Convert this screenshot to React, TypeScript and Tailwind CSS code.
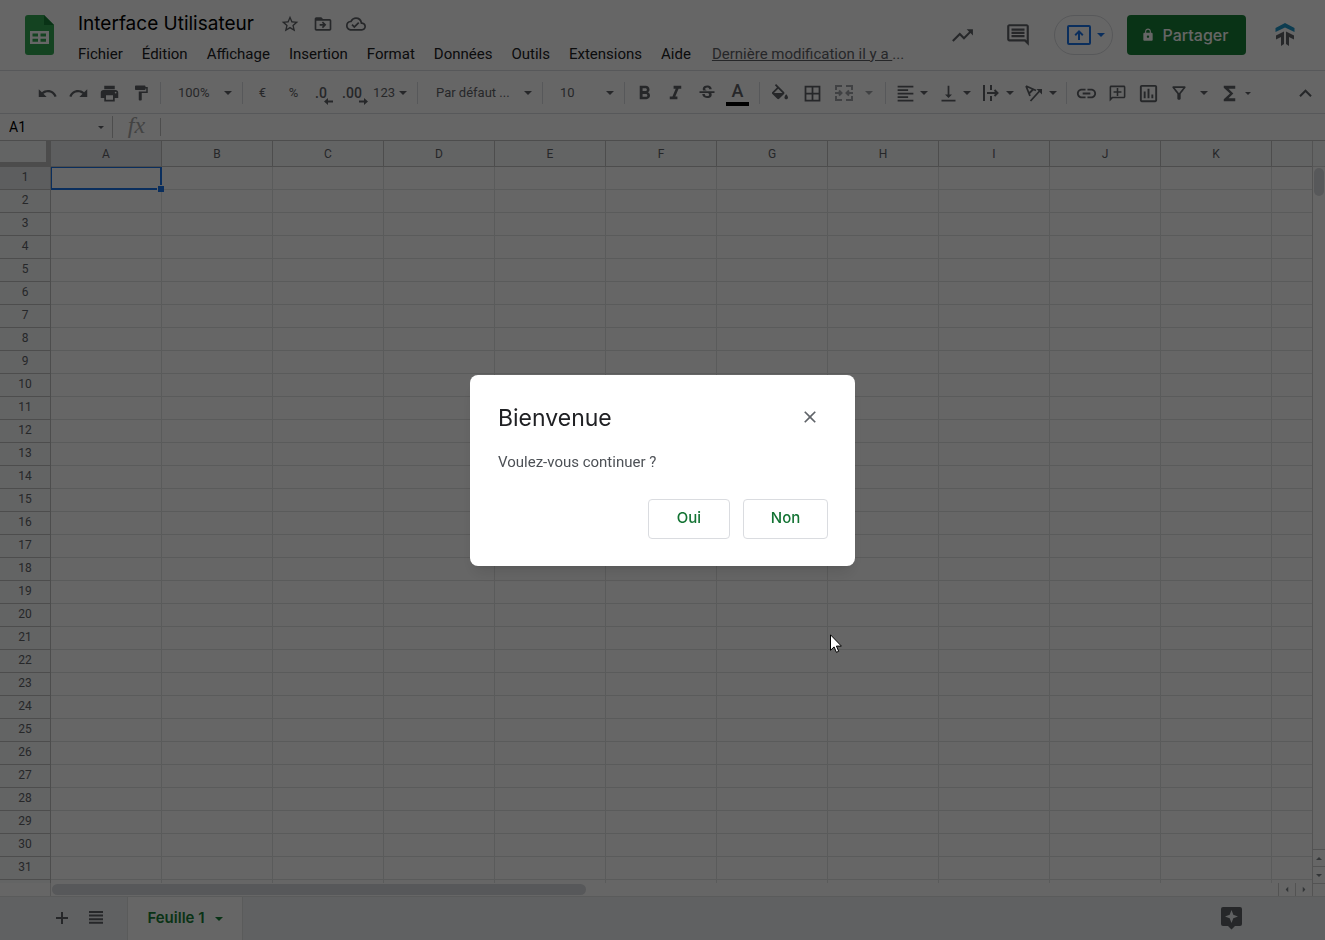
import React from "react";
import {
  MdBorderAll,
  MdClose,
  MdDriveFileMoveOutline,
  MdFormatAlignLeft,
  MdFormatBold,
  MdFormatItalic,
  MdFormatPaint,
  MdFunctions,
  MdInsertLink,
  MdKeyboardArrowUp,
  MdLock,
  MdOutlineAddComment,
  MdOutlineCloudDone,
  MdOutlineComment,
  MdOutlineFilterAlt,
  MdOutlineInsertChart,
  MdPrint,
  MdRedo,
  MdStarBorder,
  MdStrikethroughS,
  MdTrendingUp,
  MdUndo,
  MdVerticalAlignBottom,
} from "react-icons/md";

const menus = [
  "Fichier",
  "Édition",
  "Affichage",
  "Insertion",
  "Format",
  "Données",
  "Outils",
  "Extensions",
  "Aide",
];

const columns = ["A", "B", "C", "D", "E", "F", "G", "H", "I", "J", "K"];
const rows = Array.from({ length: 31 }, (_, i) => i + 1);

const Caret: React.FC<{ small?: boolean; className?: string }> = ({
  small,
  className = "",
}) => (
  <svg
    viewBox="0 0 8 4"
    className={`shrink-0 fill-current ${small ? "w-[6px] h-[3px]" : "w-2 h-1"} ${className}`}
  >
    <path d="M0 0h8L4 4z" />
  </svg>
);

const ToolButton: React.FC<{
  label: string;
  className?: string;
  children: React.ReactNode;
}> = ({ label, className = "w-[31px]", children }) => (
  <button
    aria-label={label}
    className={`h-8 shrink-0 flex items-center justify-center ${className}`}
  >
    {children}
  </button>
);

const SplitButton: React.FC<{
  label: string;
  className?: string;
  gap?: string;
  small?: boolean;
  children: React.ReactNode;
}> = ({ label, className = "w-[43px]", gap = "", small, children }) => (
  <button
    aria-label={label}
    className={`h-8 shrink-0 flex items-center ${className}`}
  >
    <span className="w-[30px] shrink-0 flex justify-center">{children}</span>
    <Caret small={small} className={gap} />
  </button>
);

const Divider = () => (
  <span className="w-px h-[22px] mx-1 shrink-0 bg-[#dadce0]" />
);

const SheetsLogo = () => (
  <svg viewBox="0 0 29 40" className="w-[29px] h-10">
    <path
      d="M3 0h16l10 10v27a3 3 0 0 1-3 3H3a3 3 0 0 1-3-3V3a3 3 0 0 1 3-3z"
      fill="#34a853"
    />
    <path d="M19 0l10 10H19z" fill="#188038" />
    <path
      d="M5 16h19v13H5zM7.500 18.500v3h5.500v-3zM15.500 18.500v3h5.500v-3zM7.500 23.700v3h5.500v-3zM15.500 23.700v3h5.500v-3z"
      fill="#fff"
      fillRule="evenodd"
    />
  </svg>
);

const AccountLogo = () => (
  <svg viewBox="0 0 20 24" className="w-5 h-6">
    <path d="M10 0l9.500 5v4L10 4.500.5 9V5z" fill="#2196c9" />
    <path d="M9 8.500V21l-3 2v-9l-5 2.500v-4z" fill="#5f6368" />
    <path d="M11 8.500V21l3 2v-9l5 2.500v-4z" fill="#5f6368" />
  </svg>
);

const DecimalIcon: React.FC<{ text: string; increase?: boolean }> = ({
  text,
  increase,
}) => (
  <span className="relative text-sm font-medium leading-4">
    {text}
    <svg
      viewBox="0 0 9 7"
      className="absolute -right-1.5 -bottom-1 w-[9px] h-[7px] fill-current"
    >
      <path
        d={increase ? "M0 2.500h5V0l4 3.500L5 7V4.500H0z" : "M9 2.500H4V0L0 3.500 4 7V4.500h5z"}
      />
    </svg>
  </span>
);

const Header = () => (
  <header className="flex items-start h-[71px] shrink-0 pl-[25px] pr-[30px] border-b border-[#dadce0]">
    <div className="pt-[15px]">
      <SheetsLogo />
    </div>
    <div className="flex-1 min-w-0 pl-6 pt-2.5">
      <div className="flex items-center h-7 text-[#5f6368]">
        <h1 className="font-['Inter'] text-[19px] leading-7 text-black">
          Interface Utilisateur
        </h1>
        <div className="flex items-center gap-[13px] ml-[26px]">
          <button aria-label="Suivre">
            <MdStarBorder size={20} />
          </button>
          <button aria-label="Déplacer">
            <MdDriveFileMoveOutline size={20} />
          </button>
          <button aria-label="État du document">
            <MdOutlineCloudDone size={20} />
          </button>
        </div>
      </div>
      <nav className="flex items-center gap-[19px] h-8 text-[15px] whitespace-nowrap text-[#202124]">
        {menus.map((menu) => (
          <button key={menu}>{menu}</button>
        ))}
        <a href="#historique" className="ml-0.5 text-[#5f6368]">
          <span className="underline">Dernière modification il y a </span>...
        </a>
      </nav>
    </div>
    <div className="flex items-center h-10 mt-[15px] shrink-0">
      <button aria-label="Activité" className="text-[#5f6368]">
        <MdTrendingUp size={25} />
      </button>
      <button aria-label="Commentaires" className="ml-[30px] text-[#5f6368]">
        <MdOutlineComment size={26} />
      </button>
      <button
        aria-label="Présenter"
        className="ml-[23px] flex items-center justify-center gap-1.5 w-[59px] h-10 pl-1 rounded-full border border-[#dadce0] text-[#1a73e8]"
      >
        <svg viewBox="0 0 24 20" className="w-6 h-5">
          <rect
            x="1"
            y="1"
            width="22"
            height="18"
            rx="1"
            fill="none"
            stroke="currentColor"
            strokeWidth="2"
          />
          <path
            d="M12 5l4.500 4.500-1.400 1.400L13 8.800V15h-2V8.800l-2.100 2.100-1.400-1.400z"
            fill="currentColor"
          />
        </svg>
        <Caret />
      </button>
      <button className="ml-3.5 flex items-center justify-center gap-2 w-[119px] h-10 pr-1 rounded bg-[#188038] font-['Inter'] text-base font-medium text-white">
        <MdLock size={14} />
        Partager
      </button>
      <button aria-label="Compte" className="ml-[29px]">
        <AccountLogo />
      </button>
    </div>
  </header>
);

const Toolbar = () => (
  <div className="flex items-center h-[43px] shrink-0 pt-0.5 pl-8 pr-1 border-b border-[#dadce0] text-[13px] text-[#5f6368]">
    <ToolButton label="Annuler">
      <MdUndo size={21} />
    </ToolButton>
    <ToolButton label="Rétablir">
      <MdRedo size={21} />
    </ToolButton>
    <ToolButton label="Imprimer">
      <MdPrint size={21} />
    </ToolButton>
    <ToolButton label="Copier la mise en forme">
      <MdFormatPaint size={18} />
    </ToolButton>
    <Divider />
    <button className="flex items-center justify-between w-[73px] pl-[13px] pr-1.5 shrink-0">
      100%
      <Caret />
    </button>
    <Divider />
    <ToolButton label="Devise">€</ToolButton>
    <ToolButton label="Pourcentage">%</ToolButton>
    <ToolButton label="Réduire les décimales" className="w-6">
      <DecimalIcon text=".0" />
    </ToolButton>
    <ToolButton label="Augmenter les décimales" className="w-[38px]">
      <DecimalIcon text=".00" increase />
    </ToolButton>
    <button className="flex items-center justify-end gap-1 w-[42px] pr-1.5 shrink-0">
      123
      <Caret />
    </button>
    <Divider />
    <button className="flex items-center justify-between w-[116px] pl-3.5 pr-1.5 shrink-0">
      Par défaut ...
      <Caret />
    </button>
    <Divider />
    <button className="flex items-center justify-between w-[73px] pl-[13px] pr-1.5 shrink-0">
      10
      <Caret />
    </button>
    <Divider />
    <ToolButton label="Gras">
      <MdFormatBold size={23} />
    </ToolButton>
    <ToolButton label="Italique">
      <MdFormatItalic size={23} />
    </ToolButton>
    <ToolButton label="Barré">
      <MdStrikethroughS size={20} />
    </ToolButton>
    <ToolButton label="Couleur du texte">
      <span className="w-[23px] border-b-4 border-black text-[18px] leading-[22px] font-medium">
        A
      </span>
    </ToolButton>
    <span className="w-0.5 shrink-0" />
    <Divider />
    <ToolButton label="Couleur de remplissage" className="w-8">
      <svg viewBox="3 0 18 20" className="w-4 h-[18px] fill-current">
        <path d="M16.560 8.940L7.620 0 6.210 1.410l2.380 2.380-5.150 5.150a1.490 1.490 0 0 0 0 2.120l5.500 5.500c.290.290.680.440 1.060.440s.770-.150 1.060-.440l5.500-5.500c.590-.580.590-1.530 0-2.120zM5.210 10L10 5.210 14.790 10H5.210zM19 11.500s-2 2.170-2 3.500c0 1.100.900 2 2 2s2-.900 2-2c0-1.330-2-3.500-2-3.500z" />
      </svg>
    </ToolButton>
    <ToolButton label="Bordures" className="w-[33px]">
      <MdBorderAll size={21} />
    </ToolButton>
    <span className="flex text-[#a0a3a7]">
      <SplitButton label="Fusionner" className="w-[52px]" gap="ml-1.5">
        <svg
          viewBox="0 0 18 16"
          className="w-[18px] h-4"
          fill="none"
          stroke="currentColor"
          strokeWidth="2"
        >
          <path d="M1 5V1h6M11 1h6v4M1 11v4h6M11 15h6v-4M0 8h6M18 8h-6M4 5.500L6.500 8 4 10.500M14 5.500L11.500 8l2.500 2.500" />
        </svg>
      </SplitButton>
    </span>
    <Divider />
    <SplitButton label="Alignement horizontal">
      <MdFormatAlignLeft size={21} />
    </SplitButton>
    <SplitButton label="Alignement vertical">
      <MdVerticalAlignBottom size={21} />
    </SplitButton>
    <SplitButton label="Retour à la ligne">
      <svg
        viewBox="0 0 16 16"
        className="w-4 h-4"
        fill="none"
        stroke="currentColor"
        strokeWidth="2"
      >
        <path d="M1 0v16M8 0v5M8 11v5M4 8h10M11.500 5L14.500 8l-3 3" />
      </svg>
    </SplitButton>
    <SplitButton label="Rotation du texte">
      <svg
        viewBox="0 0 18 17"
        className="w-[18px] h-[17px]"
        fill="none"
        stroke="currentColor"
        strokeWidth="1.800"
      >
        <path d="M1 1l10 4.500M1 1l4 10M8 4.500l-4 4M5.500 16L15.500 5" />
        <path d="M11.500 4H17v5.500z" fill="currentColor" stroke="none" />
      </svg>
    </SplitButton>
    <Divider />
    <ToolButton label="Insérer un lien">
      <MdInsertLink size={23} />
    </ToolButton>
    <ToolButton label="Insérer un commentaire">
      <MdOutlineAddComment size={19} className="-scale-x-100" />
    </ToolButton>
    <ToolButton label="Insérer un graphique">
      <MdOutlineInsertChart size={23} />
    </ToolButton>
    <SplitButton label="Filtrer" className="w-[50px]" gap="ml-1.5">
      <MdOutlineFilterAlt size={20} />
    </SplitButton>
    <SplitButton label="Fonctions" className="w-11" gap="ml-px" small>
      <MdFunctions size={23} />
    </SplitButton>
    <span className="flex-1" />
    <ToolButton label="Masquer les menus">
      <MdKeyboardArrowUp size={25} />
    </ToolButton>
  </div>
);

const FormulaBar = () => (
  <div className="flex items-center h-[27px] shrink-0 border-b border-[#c0c0c0]">
    <input
      aria-label="Zone de nom"
      defaultValue="A1"
      className="w-[98px] pl-[9px] text-sm text-black bg-transparent outline-none"
    />
    <Caret small className="text-[#5f6368]" />
    <span className="w-px h-[22px] ml-2 bg-[#c0c0c0]" />
    <span className="w-[47px] text-center font-['Liberation_Serif'] italic text-[24px] leading-6 pb-1 text-[#a8a8a8]">
      fx
    </span>
    <span className="w-px h-[18px] bg-[#c0c0c0]" />
    <input
      aria-label="Formule"
      className="flex-1 px-2 text-sm bg-transparent outline-none"
    />
  </div>
);

const Grid = () => (
  <div className="flex-1 min-w-0 overflow-hidden">
    <table className="w-full border-separate border-spacing-0 text-xs leading-none">
      <thead>
        <tr className="h-[26px]">
          <th className="p-0 w-[51px] min-w-[51px] bg-[#f8f9fa] border-r-[5px] border-b-[5px] border-[#bdbdbd]" />
          {columns.map((column) => (
            <th
              key={column}
              className={`p-0 w-[111px] min-w-[111px] font-normal text-[#5f6368] border-r border-b border-[#c0c0c0] ${
                column === "A" ? "bg-[#e8eaed]" : "bg-[#f8f9fa]"
              }`}
            >
              {column}
            </th>
          ))}
          <th className="p-0 bg-[#f8f9fa] border-b border-[#c0c0c0]" />
        </tr>
      </thead>
      <tbody>
        {rows.map((row) => (
          <tr key={row} className="h-[23px]">
            <th
              className={`p-0 pb-0.5 font-normal text-[#5f6368] border-r border-b border-[#c0c0c0] ${
                row === 1 ? "bg-[#e8eaed]" : "bg-[#f8f9fa]"
              }`}
            >
              {row}
            </th>
            {columns.map((column) => (
              <td
                key={column}
                className="relative p-0 border-r border-b border-[#e2e3e3]"
              >
                {row === 1 && column === "A" && (
                  <span className="absolute z-10 inset-0 -right-px -bottom-px border-2 border-t border-l border-[#1a73e8]">
                    <span className="absolute -right-1 -bottom-1 w-[7px] h-[7px] bg-[#1a73e8] border-t border-l border-white" />
                  </span>
                )}
              </td>
            ))}
            <td className="p-0 border-b border-[#e2e3e3]" />
          </tr>
        ))}
        <tr className="h-[23px]">
          <th className="p-0 bg-[#f8f9fa] border-r border-[#c0c0c0]" />
          {columns.map((column) => (
            <td key={column} className="p-0 border-r border-[#e2e3e3]" />
          ))}
          <td />
        </tr>
      </tbody>
    </table>
  </div>
);

const VerticalScrollbar = () => (
  <div className="flex flex-col w-[13px] shrink-0 border-l border-[#d0d0d0] text-[#80868b]">
    <div className="h-[26px] bg-[#f8f9fa] border-b border-[#d9d9d9]" />
    <div className="flex-1 p-px">
      <div className="h-7 rounded-full bg-[#dadce0]" />
    </div>
    <button
      aria-label="Défiler vers le haut"
      className="flex items-center justify-center h-[17px] border-t border-[#d0d0d0]"
    >
      <Caret small className="rotate-180" />
    </button>
    <button
      aria-label="Défiler vers le bas"
      className="flex items-center justify-center h-[17px] border-t border-[#d0d0d0]"
    >
      <Caret small />
    </button>
  </div>
);

const HorizontalScrollbar = () => (
  <div className="flex h-[13px] shrink-0 text-[#80868b]">
    <div className="w-[51px] border-r border-[#d9d9d9]" />
    <div className="flex-1 p-px">
      <div className="w-[43.600%] h-[11px] rounded-full bg-[#dadce0]" />
    </div>
    <button
      aria-label="Défiler vers la gauche"
      className="flex items-center justify-center w-[17px] border-l border-[#d0d0d0]"
    >
      <Caret small className="rotate-90" />
    </button>
    <button
      aria-label="Défiler vers la droite"
      className="flex items-center justify-center w-[17px] border-l border-[#d0d0d0]"
    >
      <Caret small className="-rotate-90" />
    </button>
    <div className="w-[13px] border-l border-t border-[#d0d0d0]" />
  </div>
);

const SheetTabs = () => (
  <footer className="flex items-stretch h-11 shrink-0 bg-[#f1f3f4] border-t border-[#e2e3e3] text-[#5f6368]">
    <button aria-label="Ajouter une feuille" className="ml-14 pb-0.5">
      <svg viewBox="0 0 12 12" className="w-3 h-3 fill-current">
        <path d="M5 0h2v5h5v2H7v5H5V7H0V5h5z" />
      </svg>
    </button>
    <button aria-label="Toutes les feuilles" className="ml-[21px] pb-0.5">
      <svg viewBox="0 0 14 13" className="w-3.5 h-[13px] fill-current">
        <path d="M0 0h14v2H0zM0 3.600h14v2H0zM0 7.200h14v2H0zM0 10.800h14v2H0z" />
      </svg>
    </button>
    <button className="ml-6 flex items-center justify-center gap-2.5 w-[116px] bg-white border-x border-[#e2e3e3] font-['Inter'] text-[15px] font-semibold text-[#188038]">
      Feuille 1
      <Caret />
    </button>
    <span className="flex-1" />
    <button aria-label="Explorer" className="mr-[83px]">
      <svg viewBox="0 0 21 23" className="w-[21px] h-[23px]">
        <path
          d="M2 0h17a2 2 0 0 1 2 2v15a2 2 0 0 1-2 2h-5l-3.500 3.500L7 19H2a2 2 0 0 1-2-2V2a2 2 0 0 1 2-2z"
          fill="#5f6368"
        />
        <path
          d="M10.500 3l1.800 4.700L17 9.500l-4.700 1.800-1.800 4.700-1.800-4.700L4 9.500l4.700-1.800z"
          fill="#f1f3f4"
        />
      </svg>
    </button>
  </footer>
);

const WelcomeDialog = () => (
  <div className="fixed inset-0 z-20 flex items-center justify-center bg-black/60">
    <div
      role="dialog"
      aria-labelledby="dialog-title"
      className="w-[385px] pt-[27px] pb-[27px] pl-7 pr-[27px] rounded-lg bg-white shadow-lg"
    >
      <div className="flex items-center justify-between h-8 pr-2">
        <h2
          id="dialog-title"
          className="font-['Inter'] text-[23px] leading-8 text-[#202124]"
        >
          Bienvenue
        </h2>
        <button aria-label="Fermer" className="pb-0.5 text-[#5f6368]">
          <MdClose size={20} />
        </button>
      </div>
      <p className="mt-[18px] text-[15px] leading-5 text-[#4d5156]">
        Voulez-vous continuer ?
      </p>
      <div className="flex justify-end gap-[13px] mt-[27px] font-['Inter'] text-[15px] font-medium text-[#137333]">
        <button className="w-[82px] h-10 rounded border border-[#dadce0]">
          Oui
        </button>
        <button className="w-[85px] h-10 rounded border border-[#dadce0]">
          Non
        </button>
      </div>
    </div>
  </div>
);

const Pointer = () => (
  <svg
    viewBox="0 0 12 19"
    className="fixed z-30 left-[830px] top-[634px] w-3 h-[19px]"
  >
    <path
      d="M.5.800v15.500l3.600-3.400 2.300 5.400 2.300-1-2.300-5.200h5z"
      fill="#fff"
      stroke="#000"
    />
  </svg>
);

const App = () => (
  <div className="flex flex-col h-screen overflow-hidden bg-white font-['Roboto']">
    <Header />
    <Toolbar />
    <FormulaBar />
    <main className="flex flex-1 min-h-0">
      <Grid />
      <VerticalScrollbar />
    </main>
    <HorizontalScrollbar />
    <SheetTabs />
    <WelcomeDialog />
    <Pointer />
  </div>
);

export default App;
